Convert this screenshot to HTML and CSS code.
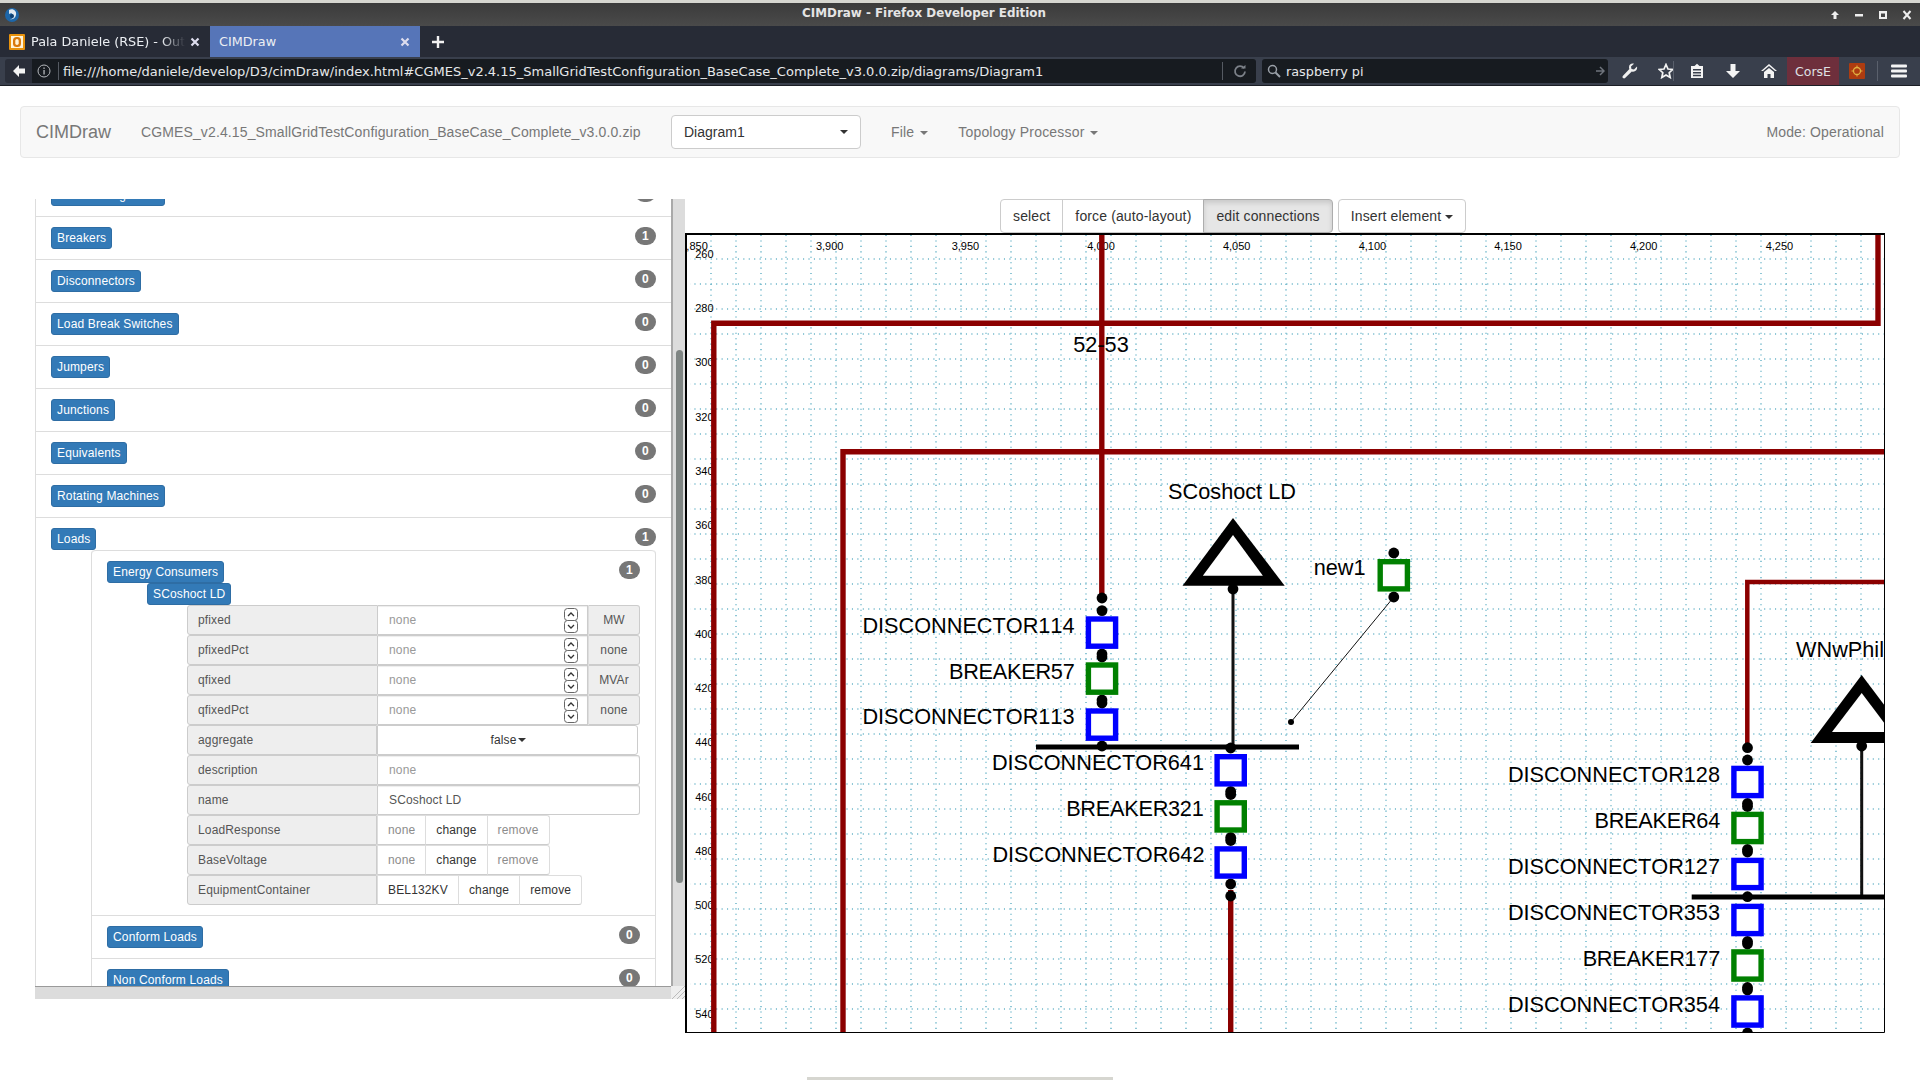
FILE: index.html
```html
<!DOCTYPE html>
<html lang="en">
<head>
<meta charset="utf-8">
<title>CIMDraw - Firefox Developer Edition</title>
<link rel="stylesheet" href="styles.css">
</head>
<body>
<div class="browser">
  <div class="titlebar">
    <svg class="ff-logo" width="16" height="16" viewBox="0 0 16 16"><circle cx="8" cy="8" r="7" fill="#1d66a8"/><path d="M5 3c4-2 8 1 7 5s-4 5-6 4c3 0 4-2 3-4S7 6 5 7c0-2 0-3 0-4z" fill="#dfe8ef"/><circle cx="8" cy="9" r="2" fill="#0d3f70"/></svg>
    <span class="title-text">CIMDraw - Firefox Developer Edition</span>
    <div class="win-controls">
      <svg width="12" height="12" viewBox="0 0 12 12"><path d="M6 2 2 6h2.500v4h3V6H10z" fill="#eee"/></svg>
      <svg width="12" height="12" viewBox="0 0 12 12"><rect x="2" y="5" width="8" height="2.500" fill="#eee"/></svg>
      <svg width="12" height="12" viewBox="0 0 12 12"><path d="M2 2h8v8H2zM4 4.500V8h4V4.500z" fill="#eee" fill-rule="evenodd"/></svg>
      <svg width="12" height="12" viewBox="0 0 12 12"><path d="M9.500 2 2.500 10M2.500 2l7 8" stroke="#eee" stroke-width="2" fill="none"/></svg>
    </div>
  </div>
  <div class="tabbar">
    <div class="tab">
      <svg class="tab-icon" width="16" height="16" viewBox="0 0 16 16"><rect width="16" height="16" rx="1" fill="#e8920c"/><rect x="2" y="2" width="12" height="12" fill="#fff4d8"/><rect x="4" y="3" width="8" height="10" rx="3.500" fill="#d9780a"/><rect x="6.300" y="5" width="3.400" height="6" rx="1.700" fill="#fff4d8"/></svg>
      <span class="tab-label tab-label-fade">Pala Daniele (RSE) - Outlook</span>
      <svg class="tab-x" width="10" height="10" viewBox="0 0 10 10"><path d="M1.500 1.500l7 7M8.500 1.500l-7 7" stroke="#dde" stroke-width="2.200"/></svg>
    </div>
    <div class="tab tab-active">
      <span class="tab-label tab-label-active">CIMDraw</span>
      <svg class="tab-x" width="10" height="10" viewBox="0 0 10 10"><path d="M1.500 1.500l7 7M8.500 1.500l-7 7" stroke="#dde" stroke-width="2.200"/></svg>
    </div>
    <svg class="new-tab" width="14" height="14" viewBox="0 0 14 14"><path d="M7 1v12M1 7h12" stroke="#f2f2f2" stroke-width="2.400"/></svg>
  </div>
  <div class="navbar-ff">
    <div class="back-btn"><svg width="14" height="14" viewBox="0 0 14 14"><path d="M7 1 1 7l6 6V9.500h6v-5H7z" fill="#f4f4f4"/></svg></div>
    <div class="urlbar">
      <svg class="info" width="14" height="14" viewBox="0 0 14 14"><circle cx="7" cy="7" r="6" fill="none" stroke="#b5b8bd"/><rect x="6.400" y="6" width="1.300" height="4.500" fill="#b5b8bd"/><rect x="6.400" y="3.500" width="1.300" height="1.400" fill="#b5b8bd"/></svg>
      <span class="url-sep"></span>
      <span class="url-text">file:///home/daniele/develop/D3/cimDraw/index.html#CGMES_v2.4.15_SmallGridTestConfiguration_BaseCase_Complete_v3.0.0.zip/diagrams/Diagram1</span>
      <span class="url-sep url-sep-right"></span>
      <svg class="reload" width="14" height="14" viewBox="0 0 14 14"><path d="M11 4.200A5 5 0 1 0 12 7.500" fill="none" stroke="#7c8189" stroke-width="1.800"/><path d="M8 4.500h4.500V1z" fill="#7c8189"/></svg>
    </div>
    <div class="searchbar">
      <svg class="search-icon" width="14" height="14" viewBox="0 0 14 14"><circle cx="5.500" cy="5.500" r="4" fill="none" stroke="#9aa0a8" stroke-width="1.500"/><path d="M8.500 8.500 13 13" stroke="#9aa0a8" stroke-width="2"/></svg>
      <span class="search-text">raspberry pi</span>
      <svg class="go" width="10" height="10" viewBox="0 0 10 10"><path d="M5 1l4 4-4 4M9 5H1" fill="none" stroke="#6f747c" stroke-width="1.500"/></svg>
    </div>
    <div class="tools">
      <svg class="tool tool-wrench" width="16" height="16" viewBox="0 0 16 16"><path d="M15 3.500 12 6.500 9.500 6 9 3.500 12 .8C9.500 0 7 1.500 7 4.200c0 .7.100 1.300.4 1.800L1 12.800c-.8.900-.7 1.600 0 2.200s1.400.7 2.100 0L9.800 8.500c3 1 6-1.500 5.200-5z" fill="#f0f0f0"/></svg>
      <svg class="tool tool-star" width="16" height="16" viewBox="0 0 16 16"><path d="M8 1.500l2 4.500 4.800.5-3.600 3.200 1 4.800L8 12l-4.200 2.500 1-4.800L1.200 6.500 6 6z" fill="none" stroke="#f4f4f4" stroke-width="1.700"/></svg>
      <span class="tool-sep"></span>
      <svg class="tool tool-clip" width="16" height="16" viewBox="0 0 16 16"><path d="M2 3h3.500L8 .8 10.500 3H14v12H2zM4 6v1.500h8V6zm0 3v1.500h8V9zm0 2.800v1.400h8v-1.400z" fill="#f4f4f4" fill-rule="evenodd"/></svg>
      <svg class="tool tool-down" width="16" height="16" viewBox="0 0 16 16"><path d="M5.500 1h5v7H15l-7 7-7-7h4.500z" fill="#f4f4f4"/></svg>
      <svg class="tool tool-home" width="16" height="16" viewBox="0 0 16 16"><path d="M8 1 0 8h2L8 3l6 5h2zM3 9l5-4 5 4v6H9.500v-4h-3v4H3z" fill="#f4f4f4"/></svg>
      <span class="corse">CorsE</span>
      <svg class="tool tool-orange" width="16" height="16" viewBox="0 0 16 16"><rect width="16" height="16" rx="1" fill="#ad3c10"/><circle cx="8" cy="8" r="3.500" fill="none" stroke="#e0b040" stroke-width="1.300"/><path d="M8 2.500v2M8 11.500v2M2.500 8h2M11.500 8h2" stroke="#e0b040"/></svg>
      <span class="tool-sep tool-sep-right"></span>
      <svg class="tool tool-menu" width="16" height="14" viewBox="0 0 16 14"><rect width="16" height="3" y="0.500" rx="1" fill="#f4f4f4"/><rect width="16" height="3" y="5.500" rx="1" fill="#f4f4f4"/><rect width="16" height="3" y="10.500" rx="1" fill="#f4f4f4"/></svg>
    </div>
  </div>
</div>

<nav class="appbar">
  <span class="brand">CIMDraw</span>
  <span class="filename">CGMES_v2.4.15_SmallGridTestConfiguration_BaseCase_Complete_v3.0.0.zip</span>
  <button class="diagram-select"><span>Diagram1</span><i class="caret"></i></button>
  <span class="menu-item menu-file">File<i class="caret caret-gap"></i></span>
  <span class="menu-item">Topology Processor<i class="caret caret-gap"></i></span>
  <span class="mode">Mode: Operational</span>
</nav>

<main class="workspace">
  <section class="panel">
    <div class="panel-view">
      <div class="item item-first"><span class="pill">AC Line Segments</span><span class="badge">1</span></div>
      <div class="item"><span class="pill">Breakers</span><span class="badge">1</span></div>
      <div class="item"><span class="pill">Disconnectors</span><span class="badge">0</span></div>
      <div class="item"><span class="pill">Load Break Switches</span><span class="badge">0</span></div>
      <div class="item"><span class="pill">Jumpers</span><span class="badge">0</span></div>
      <div class="item"><span class="pill">Junctions</span><span class="badge">0</span></div>
      <div class="item"><span class="pill">Equivalents</span><span class="badge">0</span></div>
      <div class="item"><span class="pill">Rotating Machines</span><span class="badge">0</span></div>
      <div class="item item-open">
        <div class="item-head"><span class="pill">Loads</span><span class="badge">1</span></div>
        <div class="nested">
          <div class="item item-nested">
            <div class="item-head"><span class="pill">Energy Consumers</span><span class="badge">1</span></div>
            <div class="object"><span class="pill">SCoshoct LD</span></div>
            <div class="attrs">
              <div class="row"><span class="lbl">pfixed</span><div class="field field-num"><span class="ph">none</span><svg class="spin" width="14" height="25" viewBox="0 0 14 25"><rect x=".5" y=".5" width="13" height="12" rx="3" fill="#fff" stroke="#666"/><rect x=".5" y="12.500" width="13" height="12" rx="3" fill="#fff" stroke="#666"/><path d="M4 8l3-3 3 3M4 17l3 3 3-3" fill="none" stroke="#333" stroke-width="1.300"/></svg></div><span class="addon">MW</span></div>
              <div class="row"><span class="lbl">pfixedPct</span><div class="field field-num"><span class="ph">none</span><svg class="spin" width="14" height="25" viewBox="0 0 14 25"><rect x=".5" y=".5" width="13" height="12" rx="3" fill="#fff" stroke="#666"/><rect x=".5" y="12.500" width="13" height="12" rx="3" fill="#fff" stroke="#666"/><path d="M4 8l3-3 3 3M4 17l3 3 3-3" fill="none" stroke="#333" stroke-width="1.300"/></svg></div><span class="addon">none</span></div>
              <div class="row"><span class="lbl">qfixed</span><div class="field field-num"><span class="ph">none</span><svg class="spin" width="14" height="25" viewBox="0 0 14 25"><rect x=".5" y=".5" width="13" height="12" rx="3" fill="#fff" stroke="#666"/><rect x=".5" y="12.500" width="13" height="12" rx="3" fill="#fff" stroke="#666"/><path d="M4 8l3-3 3 3M4 17l3 3 3-3" fill="none" stroke="#333" stroke-width="1.300"/></svg></div><span class="addon">MVAr</span></div>
              <div class="row"><span class="lbl">qfixedPct</span><div class="field field-num"><span class="ph">none</span><svg class="spin" width="14" height="25" viewBox="0 0 14 25"><rect x=".5" y=".5" width="13" height="12" rx="3" fill="#fff" stroke="#666"/><rect x=".5" y="12.500" width="13" height="12" rx="3" fill="#fff" stroke="#666"/><path d="M4 8l3-3 3 3M4 17l3 3 3-3" fill="none" stroke="#333" stroke-width="1.300"/></svg></div><span class="addon">none</span></div>
              <div class="row"><span class="lbl lbl-btn">aggregate</span><div class="field field-select">false<i class="caret caret-small"></i></div></div>
              <div class="row"><span class="lbl">description</span><div class="field field-end"><span class="ph">none</span></div></div>
              <div class="row"><span class="lbl">name</span><div class="field field-end">SCoshoct LD</div></div>
              <div class="row"><span class="lbl lbl-btn">LoadResponse</span><span class="seg seg-muted">none</span><span class="seg">change</span><span class="seg seg-muted seg-last">remove</span></div>
              <div class="row"><span class="lbl lbl-btn">BaseVoltage</span><span class="seg seg-muted">none</span><span class="seg">change</span><span class="seg seg-muted seg-last">remove</span></div>
              <div class="row"><span class="lbl lbl-btn">EquipmentContainer</span><span class="seg">BEL132KV</span><span class="seg">change</span><span class="seg seg-last">remove</span></div>
            </div>
          </div>
          <div class="item"><span class="pill">Conform Loads</span><span class="badge">0</span></div>
          <div class="item"><span class="pill">Non Conform Loads</span><span class="badge">0</span></div>
        </div>
      </div>
    </div>
    <div class="vbar"><div class="vthumb"></div></div>
    <div class="hbar"></div>
    <div class="corner"><svg width="14" height="14" viewBox="0 0 14 14"><path d="M1 14 14 1M6 14l8-8M11 14l3-3" stroke="#bbb" stroke-width="1"/></svg></div>
  </section>

  <section class="stage">
    <div class="toolbar">
      <div class="btn-group">
        <button class="btn">select</button>
        <button class="btn">force (auto-layout)</button>
        <button class="btn btn-active">edit connections</button>
      </div>
      <button class="btn btn-single">Insert element <i class="caret"></i></button>
    </div>
    <svg class="diagram" width="1200" height="800" viewBox="685 233 1200 800">
      <rect x="685" y="233" width="1200" height="800" fill="#fff"/>
      <path class="grid" d="M711 235V1032M736 235V1032M761 235V1032M786 235V1032M811 235V1032M836 235V1032M861 235V1032M886 235V1032M911 235V1032M936 235V1032M961 235V1032M986 235V1032M1011 235V1032M1036 235V1032M1061 235V1032M1086 235V1032M1111 235V1032M1136 235V1032M1161 235V1032M1186 235V1032M1211 235V1032M1236 235V1032M1261 235V1032M1286 235V1032M1311 235V1032M1336 235V1032M1361 235V1032M1386 235V1032M1411 235V1032M1436 235V1032M1461 235V1032M1486 235V1032M1511 235V1032M1536 235V1032M1561 235V1032M1586 235V1032M1611 235V1032M1636 235V1032M1661 235V1032M1686 235V1032M1711 235V1032M1736 235V1032M1761 235V1032M1786 235V1032M1811 235V1032M1836 235V1032M1861 235V1032"/>
      <path class="grid grid-h" d="M690 259H1884M690 284H1884M690 309H1884M690 334H1884M690 359H1884M690 384H1884M690 409H1884M690 434H1884M690 459H1884M690 484H1884M690 509H1884M690 534H1884M690 559H1884M690 584H1884M690 609H1884M690 634H1884M690 659H1884M690 684H1884M690 709H1884M690 734H1884M690 759H1884M690 784H1884M690 809H1884M690 834H1884M690 859H1884M690 884H1884M690 909H1884M690 934H1884M690 959H1884M690 984H1884M690 1009H1884"/>

      <g class="axis axis-x">
        <text x="694" y="250">3,850</text><text x="829.700" y="250">3,900</text><text x="965.400" y="250">3,950</text><text x="1101" y="250">4,000</text><text x="1236.700" y="250">4,050</text><text x="1372.400" y="250">4,100</text><text x="1508" y="250">4,150</text><text x="1643.700" y="250">4,200</text><text x="1779.400" y="250">4,250</text>
      </g>
      <g class="axis axis-y">
        <text x="713.500" y="258">260</text><text x="713.500" y="312">280</text><text x="713.500" y="366">300</text><text x="713.500" y="421">320</text><text x="713.500" y="475">340</text><text x="713.500" y="529">360</text><text x="713.500" y="584">380</text><text x="713.500" y="638">400</text><text x="713.500" y="692">420</text><text x="713.500" y="746">440</text><text x="713.500" y="801">460</text><text x="713.500" y="855">480</text><text x="713.500" y="909">500</text><text x="713.500" y="963">520</text><text x="713.500" y="1018">540</text>
      </g>

      <path class="line" d="M713.800 1033V323.200H1878V233"/>
      <path class="line" d="M843 1033V451.800H1885"/>
      <path class="line" d="M1101.800 233V596"/>
      <path class="line line-thin" d="M1747.300 746V582H1885"/>
      <path class="line" d="M1230.700 890V1033"/>
      <text class="label label-mid" x="1101" y="352">52-53</text>

      <g class="conn">
        <path d="M1233 589V747M1861.700 746V897" stroke="#111" stroke-width="3" fill="none"/>
        <path d="M1393.800 597 1291 722" stroke="#111" stroke-width="1" fill="none"/>
        <path d="M1036 747H1299M1691.700 897H1885" stroke="#000" stroke-width="5" fill="none"/>
        <circle cx="1102" cy="598" r="5.400"/><circle cx="1102" cy="610.600" r="5.400"/><circle cx="1102" cy="654" r="5.400"/><circle cx="1102" cy="657" r="5.400"/><circle cx="1102" cy="700" r="5.400"/><circle cx="1102" cy="703" r="5.400"/><circle cx="1102" cy="746" r="5.400"/>
        <circle cx="1230.700" cy="748" r="5.400"/><circle cx="1230.700" cy="791.500" r="5.400"/><circle cx="1230.700" cy="794.500" r="5.400"/><circle cx="1230.700" cy="837.500" r="5.400"/><circle cx="1230.700" cy="840.500" r="5.400"/><circle cx="1230.700" cy="884" r="5.400"/><circle cx="1230.700" cy="896" r="5.400"/>
        <circle cx="1747.500" cy="747.700" r="5.400"/><circle cx="1747.500" cy="760" r="5.400"/><circle cx="1747.500" cy="803.500" r="5.400"/><circle cx="1747.500" cy="806.500" r="5.400"/><circle cx="1747.500" cy="849.500" r="5.400"/><circle cx="1747.500" cy="852" r="5.400"/><circle cx="1747.500" cy="896.700" r="5.400"/><circle cx="1747.500" cy="941.500" r="5.400"/><circle cx="1747.500" cy="944" r="5.400"/><circle cx="1747.500" cy="987.500" r="5.400"/><circle cx="1747.500" cy="990" r="5.400"/><circle cx="1747.500" cy="1033" r="5.400"/>
        <circle cx="1233" cy="589" r="5.400"/><circle cx="1861.700" cy="746" r="5.400"/>
        <circle cx="1393.800" cy="553" r="5.400"/><circle cx="1393.800" cy="597" r="5.400"/><circle cx="1291" cy="722" r="3"/>
      </g>

      <polygon points="1233,518 1284.700,585.700 1182.500,585.700" fill="#000"/>
      <polygon points="1233,535 1262.900,575.700 1202.800,575.700" fill="#fff"/>
      <polygon points="1861.700,675 1913,743 1810.700,743" fill="#000"/>
      <polygon points="1861.700,693 1891,732 1832,732" fill="#fff"/>

      <rect class="sw sw-d" x="1088.400" y="619" width="27.200" height="27.200"/>
      <rect class="sw sw-b" x="1088.400" y="665" width="27.200" height="27.200"/>
      <rect class="sw sw-d" x="1088.400" y="711" width="27.200" height="27.200"/>
      <rect class="sw sw-d" x="1217.100" y="756.700" width="27.200" height="27.200"/>
      <rect class="sw sw-b" x="1217.100" y="802.800" width="27.200" height="27.200"/>
      <rect class="sw sw-d" x="1217.100" y="848.900" width="27.200" height="27.200"/>
      <rect class="sw sw-b" x="1380.200" y="561.700" width="27.200" height="27.200"/>
      <rect class="sw sw-d" x="1733.900" y="768.400" width="27.200" height="27.200"/>
      <rect class="sw sw-b" x="1733.900" y="814.400" width="27.200" height="27.200"/>
      <rect class="sw sw-d" x="1733.900" y="860.400" width="27.200" height="27.200"/>
      <rect class="sw sw-d" x="1733.900" y="906.400" width="27.200" height="27.200"/>
      <rect class="sw sw-b" x="1733.900" y="951.900" width="27.200" height="27.200"/>
      <rect class="sw sw-d" x="1733.900" y="997.900" width="27.200" height="27.200"/>

      <g class="labels-end">
        <text class="label" x="1074.500" y="632.600">DISCONNECTOR114</text>
        <text class="label label-br" x="1074.500" y="678.600">BREAKER57</text>
        <text class="label" x="1074.500" y="724">DISCONNECTOR113</text>
        <text class="label" x="1204" y="770.300">DISCONNECTOR641</text>
        <text class="label label-br" x="1203.500" y="816.400">BREAKER321</text>
        <text class="label" x="1204.500" y="862">DISCONNECTOR642</text>
        <text class="label" x="1365.500" y="575">new1</text>
        <text class="label" x="1720" y="782">DISCONNECTOR128</text>
        <text class="label label-br" x="1720" y="828">BREAKER64</text>
        <text class="label" x="1720" y="874">DISCONNECTOR127</text>
        <text class="label" x="1720" y="920">DISCONNECTOR353</text>
        <text class="label label-br" x="1720" y="965.500">BREAKER177</text>
        <text class="label" x="1720" y="1011.500">DISCONNECTOR354</text>
      </g>
      <text class="label label-mid" x="1232" y="499">SCoshoct LD</text>
      <text class="label" x="1796" y="657">WNwPhil</text>

      <path d="M686 1033V234H1885" fill="none" stroke="#000" stroke-width="2"/>
      <path d="M685 1032.500H1884.500V233" fill="none" stroke="#000" stroke-width="1"/>
    </svg>
  </section>
</main>
<div class="window-edge"></div>
</body>
</html>
```

FILE: styles.css
```css
* { box-sizing: border-box; }
html, body { margin: 0; padding: 0; }
body {
  width: 1920px;
  height: 1080px;
  overflow: hidden;
  background: #fff;
  font-family: "Liberation Sans", Arial, sans-serif;
  font-size: 14px;
  color: #333;
  position: relative;
}
button { font: inherit; letter-spacing: inherit; }

/* browser chrome */
.browser { font-family: "DejaVu Sans", sans-serif; height: 86px; }
.titlebar {
  height: 26px;
  border-top: 3px solid #d6d6d0;
  background: linear-gradient(#3b3b3b, #4a4a4a);
  display: flex;
  align-items: center;
  position: relative;
}
.ff-logo { margin-left: 4px; }
.title-text {
  position: absolute;
  left: 0;
  right: 72px;
  top: 3px;
  text-align: center;
  color: #e4e4e4;
  font-size: 11.900px;
  font-weight: bold;
}
.win-controls {
  margin-left: auto;
  display: flex;
  gap: 12px;
  padding-right: 7px;
}
.tabbar {
  height: 31px;
  background: #272b36;
  display: flex;
  align-items: stretch;
}
.tab {
  width: 210px;
  display: flex;
  align-items: center;
  position: relative;
  color: #eceff3;
}
.tab-active { background: #5675b8; }
.tab-icon { margin-left: 9px; }
.tab-label { font-size: 12.800px; white-space: nowrap; overflow: hidden; }
.tab-label-fade {
  margin-left: 6px;
  width: 154px;
  -webkit-mask-image: linear-gradient(to right, #000 85%, transparent 100%);
  mask-image: linear-gradient(to right, #000 85%, transparent 100%);
}
.tab-label-active { margin-left: 9px; width: 170px; }
.tab-x { position: absolute; left: 190px; top: 11px; }
.new-tab { align-self: center; margin-left: 11px; }

.navbar-ff {
  height: 29px;
  background: #393f4c;
  border-bottom: 1px solid #1b1e25;
  display: flex;
  align-items: center;
  padding-left: 5px;
}
.back-btn {
  width: 27px;
  height: 24px;
  background: #2a2e39;
  border-radius: 3px 0 0 3px;
  display: flex;
  align-items: center;
  justify-content: center;
}
.urlbar {
  width: 1224px;
  height: 24px;
  background: #171b20;
  display: flex;
  align-items: center;
  color: #e6e8ea;
  font-size: 13px;
  border-radius: 0 3px 3px 0;
}
.info { margin-left: 5px; }
.url-sep { width: 1px; height: 18px; background: #555a62; margin-left: 7px; }
.url-text { margin-left: 4px; width: 1155px; white-space: nowrap; overflow: hidden; }
.url-sep-right { margin-left: 4px; }
.reload { margin-left: 10px; }
.searchbar {
  width: 346px;
  height: 24px;
  margin-left: 6px;
  background: #171b20;
  border-radius: 3px;
  display: flex;
  align-items: center;
  color: #e6e8ea;
  font-size: 12.800px;
  position: relative;
}
.search-icon { margin-left: 5px; }
.search-text { margin-left: 5px; }
.go { margin-left: auto; margin-right: 3px; }
.tools { display: flex; align-items: center; height: 28px; position: relative; flex: 1; }
.tool { position: absolute; top: 6px; }
.tool-wrench { left: 14px; }
.tool-star { left: 50px; }
.tool-clip { left: 81px; }
.tool-down { left: 117px; }
.tool-home { left: 153px; }
.tool-orange { left: 241px; }
.tool-menu { left: 283px; top: 7px; }
.tool-sep { position: absolute; left: 65px; top: 4px; width: 1px; height: 20px; background: #5a606c; }
.tool-sep-right { left: 269px; }
.corse {
  position: absolute;
  left: 179px;
  top: 0;
  width: 52px;
  height: 28px;
  background: #6e2f3c;
  color: #dfe1e4;
  font-size: 12.500px;
  display: flex;
  align-items: center;
  justify-content: center;
}

/* application navbar */
.appbar {
  margin: 20px 20px 0 20px;
  height: 52px;
  width: 1880px;
  background: #f8f8f8;
  border: 1px solid #e7e7e7;
  border-radius: 4px;
  display: flex;
  align-items: center;
  padding: 0 15px;
  color: #777;
}
.brand { font-size: 18px; width: 105px; }
.filename { width: 530px; white-space: nowrap; letter-spacing: .125px; }
.diagram-select {
  width: 190px;
  height: 34px;
  background: #fff;
  border: 1px solid #ccc;
  border-radius: 4px;
  color: #333;
  padding: 0 12px;
  display: flex;
  align-items: center;
  justify-content: space-between;
}
.menu-item { margin-left: 29px; white-space: nowrap; letter-spacing: .18px; }
.menu-file { margin-left: 30px; margin-right: 1px; }
.mode { margin-left: auto; letter-spacing: .14px; }
.caret {
  display: inline-block;
  width: 0;
  height: 0;
  border-top: 4px solid currentColor;
  border-left: 4px solid transparent;
  border-right: 4px solid transparent;
  vertical-align: middle;
}
.caret-gap { margin-left: 6px; }
.caret-small { border-top-width: 4px; border-left-width: 4px; border-right-width: 4px; }

/* workspace */
.workspace {
  display: flex;
  align-items: flex-start;
  margin: 41px 0 0 35px;
}
.panel {
  width: 650px;
  height: 800px;
  display: grid;
  grid-template-columns: 636px 14px;
  grid-template-rows: 787px 13px;
  font-size: 12px;
  letter-spacing: .15px;
}
.panel-view { overflow: hidden; border-left: 1px solid #ddd; }
.item {
  border-top: 1px solid #ddd;
  padding: 10px 15px;
  display: flex;
  align-items: flex-start;
  justify-content: space-between;
  height: 43px;
}
.item-first { margin-top: -26px; }
.item-open, .item-nested { display: block; height: auto; }
.item-head { display: flex; align-items: flex-start; justify-content: space-between; }
.pill {
  display: inline-block;
  height: 22px;
  line-height: 20px;
  padding: 0 5px;
  background: #337ab7;
  border: 1px solid #2e6da4;
  border-radius: 3px;
  color: #fff;
  white-space: nowrap;
}
.badge {
  width: 21px;
  height: 18px;
  line-height: 18px;
  text-align: center;
  background: #777;
  color: #fff;
  border-radius: 10px;
  font-weight: bold;
}
.nested {
  margin-left: 40px;
  border: 1px solid #ddd;
  border-width: 0 1px;
  border-radius: 4px 4px 0 0;
  position: relative;
}
.nested > .item:first-child { border-top: 1px solid #ddd; border-radius: 4px 4px 0 0; }
.object { margin-left: 40px; height: 22px; }
.attrs { margin-left: 80px; }
.row { display: flex; height: 30px; }
.lbl {
  flex: 0 0 191px;
  background: #eee;
  border: 1px solid #ccc;
  border-radius: 3px 0 0 3px;
  padding: 0 10px;
  line-height: 28px;
  color: #555;
}
.lbl-btn { flex-basis: 190px; }
.field {
  border: 1px solid #ccc;
  border-left: 0;
  background: #fff;
  box-shadow: inset 0 1px 1px rgba(0, 0, 0, .075);
  padding: 0 10px 0 11px;
  display: flex;
  align-items: center;
  color: #555;
}
.field-num { flex: 0 0 210px; justify-content: space-between; padding-right: 9px; }
.field-end { flex: 0 0 262px; border-radius: 0 3px 3px 0; }
.field-select {
  flex: 0 0 261px;
  border-radius: 0 3px 3px 0;
  justify-content: center;
  color: #333;
  box-shadow: none;
  border-left: 1px solid #ccc;
  gap: 1px;
}
.ph { color: #999; }
.addon {
  flex: 0 0 52px;
  background: #eee;
  border: 1px solid #ccc;
  border-left: 1px solid #ddd;
  border-radius: 0 3px 3px 0;
  text-align: center;
  line-height: 28px;
  color: #555;
}
.seg {
  background: #fff;
  border: 1px solid #ddd;
  border-left: 1px solid #ddd;
  border-bottom-color: #ccc;
  padding: 0 10px;
  line-height: 28px;
  color: #333;
  margin-right: -1px;
}
.seg-muted { color: #8c8c8c; }
.seg-last { border-radius: 0 3px 3px 0; margin-right: 0; }

.vbar {
  position: relative;
  background: #dcdcdc;
  border-left: 2px solid #a9a9a9;
}
.vthumb {
  position: absolute;
  left: 3px;
  top: 151px;
  width: 7px;
  height: 533px;
  border-radius: 4px;
  background: #7f8583;
}
.hbar { background: #dcdcdc; border-top: 1px solid #9a9a9a; }
.corner { background: #eee; line-height: 0; margin-top: -1px; }

.stage { width: 1200px; }
.toolbar {
  height: 34px;
  padding-left: 315px;
  display: flex;
  gap: 5px;
  letter-spacing: .13px;
}
.btn-group { display: flex; }
.btn {
  height: 34px;
  padding: 0 12px;
  background: #fff;
  border: 1px solid #ccc;
  color: #333;
  white-space: nowrap;
  margin-left: -1px;
}
.btn-group .btn:first-child { margin-left: 0; border-radius: 4px 0 0 4px; }
.btn-group .btn:last-child { border-radius: 0 4px 4px 0; }
.btn-active {
  background: #e6e6e6;
  border-color: #adadad;
  box-shadow: inset 0 3px 5px rgba(0, 0, 0, .125);
}
.btn-single { border-radius: 4px; margin-left: 0; }

.diagram { display: block; font-family: "Liberation Sans", Arial, sans-serif; }
.grid { fill: none; stroke: #6bb5c9; stroke-width: 1.500; stroke-dasharray: 1.100 4.330; }
.grid-h { stroke-dashoffset: 1; }
.axis text { font-size: 11px; fill: #000; }
.axis-x text { text-anchor: middle; }
.axis-y text { text-anchor: end; }
.line { fill: none; stroke: #8b0000; stroke-width: 5.400; }
.line-thin { stroke-width: 4.500; }
.conn circle { fill: #000; }
.sw { fill: #fff; stroke-width: 5.400; }
.sw-d { stroke: #0000ff; }
.sw-b { stroke: #008000; }
.label { font-size: 21.700px; fill: #000; font-kerning: none; }
.label-br { letter-spacing: -.25px; }
.label-mid { text-anchor: middle; }
.labels-end text { text-anchor: end; }

.window-edge {
  position: absolute;
  left: 807px;
  bottom: 0;
  width: 306px;
  height: 3px;
  background: #d6d6d0;
}
```
